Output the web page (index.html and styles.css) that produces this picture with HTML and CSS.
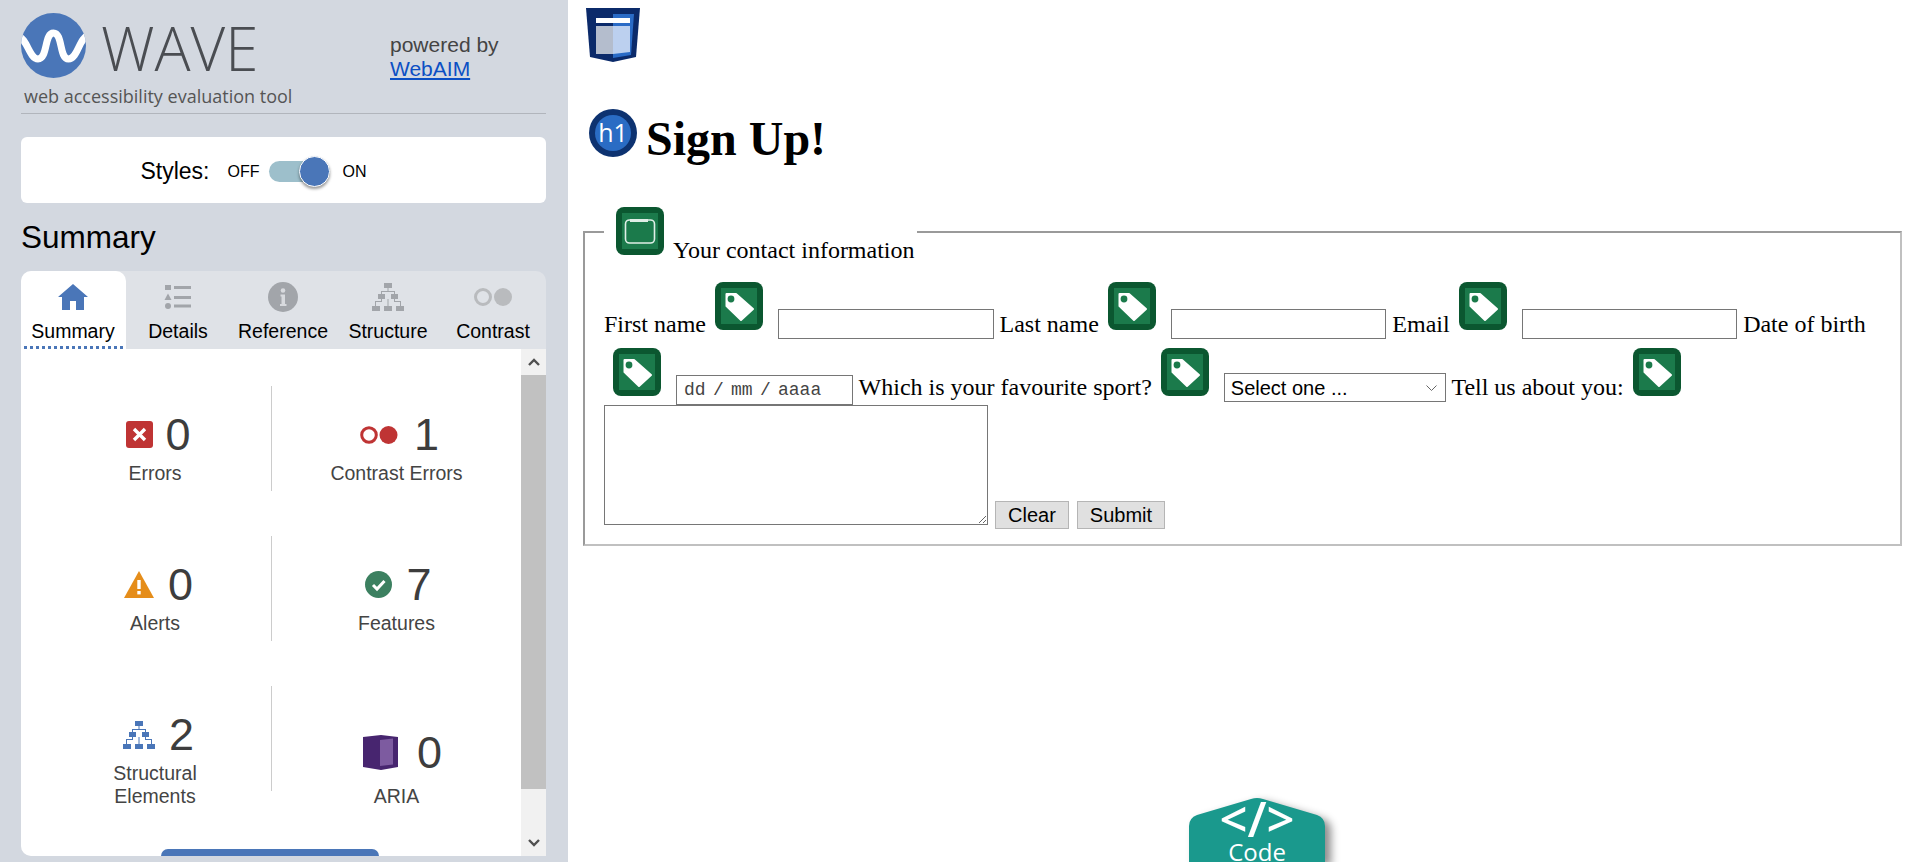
FILE: index.html
```html
<!DOCTYPE html>
<html lang="en">
<head>
    <meta charset="UTF-8">
    <meta name="viewport" content="width=device-width, initial-scale=1.0">
    <title>WAVE - Sign Up!</title>
    <link rel="stylesheet" href="styles.css">
</head>
<body>
    <svg class="defs" width="0" height="0">
        <symbol id="tag" viewBox="0 0 48 48">
            <rect width="48" height="48" rx="8" fill="#0b5730"/>
            <rect x="6" y="6" width="36" height="36" fill="#1b7a4b"/>
            <path d="M11.500 12 L21 12 L38 27 L26 38 L11.500 24 Z" fill="#fff" stroke="#fff" stroke-width="2" stroke-linejoin="round"/>
            <circle cx="16" cy="17" r="3.4" fill="#1b7a4b"/>
        </symbol>
    </svg>

    <div id="sidebar">
        <div class="brand">
            <div class="brand-main">
                <div class="brand-logo">
                    <svg class="logo-mark" width="65" height="65" viewBox="0 0 65 65">
                        <defs><clipPath id="logoClip"><circle cx="32.5" cy="32.5" r="32.5"/></clipPath></defs>
                        <circle cx="32.5" cy="32.5" r="32.5" fill="#4a76b8"/>
                        <path clip-path="url(#logoClip)" d="M-3 24 C6 24 8 46 17 46 C27 46 23 20 32.5 20 C42 20 38 46 47.5 46 C57 46 58 24 68 22" fill="none" stroke="#fff" stroke-width="7"/>
                    </svg>
                    <span class="logo-text">WAVE</span>
                </div>
                <div class="tagline">web accessibility evaluation tool</div>
            </div>
            <div class="powered">powered by<br><a href="#">WebAIM</a></div>
        </div>

        <div class="styles-card">
            <span class="styles-label">Styles:</span>
            <span class="switch-text">OFF</span>
            <span class="switch"><span class="switch-knob"></span></span>
            <span class="switch-text">ON</span>
        </div>

        <h2 class="summary-title">Summary</h2>

        <div class="panel">
            <ul class="tabs">
                <li class="tab active">
                    <svg width="30" height="26" viewBox="0 0 30 26"><path d="M15 0 L30 13 L26 13 L26 26 L18 26 L18 17 L12 17 L12 26 L4 26 L4 13 L0 13 Z" fill="#4a76b8"/></svg>
                    <span>Summary</span>
                </li>
                <li class="tab">
                    <svg width="30" height="26" viewBox="0 0 30 26" fill="#a2a5aa"><rect x="2" y="1" width="6" height="5"/><path d="M5 9.5 L8.5 16 L1.5 16 Z"/><circle cx="5" cy="22" r="3"/><rect x="11" y="2" width="17" height="3"/><rect x="11" y="12" width="17" height="3"/><rect x="11" y="20.500" width="17" height="3"/></svg>
                    <span>Details</span>
                </li>
                <li class="tab">
                    <svg width="30" height="30" viewBox="0 0 30 30"><circle cx="15" cy="15" r="15" fill="#a2a5aa"/><circle cx="15" cy="8.500" r="2.300" fill="#d8dade"/><path d="M12.500 12.500 L17 12.500 L17 22 L18.500 22 L18.500 24 L12 24 L12 22 L13.500 22 L13.500 14.500 L12.500 14.500 Z" fill="#d8dade"/></svg>
                    <span>Reference</span>
                </li>
                <li class="tab">
                    <svg width="32" height="28" viewBox="0 0 32 28" fill="#a2a5aa"><rect x="12" y="0" width="8" height="5"/><rect x="6" y="11" width="7" height="5"/><rect x="19" y="11" width="7" height="5"/><rect x="0" y="23" width="8" height="5"/><rect x="12" y="23" width="8" height="5"/><rect x="24" y="23" width="8" height="5"/><path d="M15.500 5 h1 v3 h-1z M9 8 h14 v3 h-1 v-2 h-12 v2 h-1z M9 16 h1 v3 h-6 v4 h-1 v-5 h6z M22 16 h1 v2 h6 v5 h-1 v-4 h-6z M15.500 16 h1 v7 h-1z"/></svg>
                    <span>Structure</span>
                </li>
                <li class="tab">
                    <svg class="tab-contrast" width="38" height="18" viewBox="0 0 38 18"><circle cx="9" cy="9" r="7.500" fill="none" stroke="#b9bbbe" stroke-width="3"/><circle cx="29" cy="9" r="9" fill="#b9bbbe"/></svg>
                    <span>Contrast</span>
                </li>
            </ul>
            <div class="panel-body">
                <div class="stats">
                    <div class="stat stat-left">
                        <div class="stat-row stat-row-tight">
                            <svg width="27" height="27" viewBox="0 0 27 27"><rect width="27" height="27" rx="3" fill="#bf3434"/><path d="M8 8 L19 19 M19 8 L8 19" stroke="#fff" stroke-width="3.400"/></svg>
                            <span class="stat-num">0</span>
                        </div>
                        <div class="stat-label">Errors</div>
                    </div>
                    <div class="stat stat-right">
                        <div class="stat-row stat-row-contrast">
                            <svg width="38" height="18" viewBox="0 0 38 18"><circle cx="9" cy="9" r="7.300" fill="none" stroke="#bf3434" stroke-width="3"/><circle cx="28.500" cy="9" r="9" fill="#bf3434"/></svg>
                            <span class="stat-num">1</span>
                        </div>
                        <div class="stat-label">Contrast Errors</div>
                    </div>
                    <div class="stat stat-left">
                        <div class="stat-row">
                            <svg width="30" height="27" viewBox="0 0 30 27"><path d="M15 0 L30 27 L0 27 Z" fill="#e58d1a"/><rect x="13.300" y="9" width="3.400" height="9" fill="#fff"/><rect x="13.300" y="20" width="3.400" height="3.400" fill="#fff"/></svg>
                            <span class="stat-num">0</span>
                        </div>
                        <div class="stat-label">Alerts</div>
                    </div>
                    <div class="stat stat-right">
                        <div class="stat-row">
                            <svg width="27" height="27" viewBox="0 0 27 27"><circle cx="13.500" cy="13.500" r="13.500" fill="#3c8060"/><path d="M8 14 L12 18 L19.500 10" fill="none" stroke="#fff" stroke-width="3"/></svg>
                            <span class="stat-num">7</span>
                        </div>
                        <div class="stat-label">Features</div>
                    </div>
                    <div class="stat stat-left">
                        <div class="stat-row">
                            <svg width="32" height="28" viewBox="0 0 32 28" fill="#4a76b8"><rect x="12" y="0" width="8" height="5"/><rect x="6" y="11" width="7" height="5"/><rect x="19" y="11" width="7" height="5"/><rect x="0" y="23" width="8" height="5"/><rect x="12" y="23" width="8" height="5"/><rect x="24" y="23" width="8" height="5"/><path d="M15.500 5 h1 v3 h-1z M9 8 h14 v3 h-1 v-2 h-12 v2 h-1z M9 16 h1 v3 h-6 v4 h-1 v-5 h6z M22 16 h1 v2 h6 v5 h-1 v-4 h-6z M15.500 16 h1 v7 h-1z"/></svg>
                            <span class="stat-num">2</span>
                        </div>
                        <div class="stat-label">Structural<br>Elements</div>
                    </div>
                    <div class="stat stat-right stat-low">
                        <div class="stat-row stat-row-wide">
                            <svg width="35" height="35" viewBox="0 0 35 35"><path d="M0 2 L18 0 L35 2 L35 32 L18 35 L0 32 Z" fill="#47256f"/><path d="M17 5 L30 3.500 L30 29.500 L17 31 Z" fill="#7d5ba0"/></svg>
                            <span class="stat-num">0</span>
                        </div>
                        <div class="stat-label">ARIA</div>
                    </div>
                </div>
                <div class="run-btn"></div>
                <div class="scrollbar">
                    <div class="scroll-arrow">
                        <svg width="12" height="8" viewBox="0 0 12 8"><path d="M1 7 L6 2 L11 7" fill="none" stroke="#505050" stroke-width="2.400"/></svg>
                    </div>
                    <div class="scroll-thumb"></div>
                    <div class="scroll-space"></div>
                    <div class="scroll-arrow">
                        <svg width="12" height="8" viewBox="0 0 12 8"><path d="M1 1 L6 6 L11 1" fill="none" stroke="#505050" stroke-width="2.400"/></svg>
                    </div>
                </div>
            </div>
        </div>
    </div>

    <div id="main">
        <svg class="shield" width="54" height="54" viewBox="0 0 54 54">
            <path d="M0 0 L54 0 L50 49 L27 54 L4 49 Z" fill="#0b2a6a"/>
            <path d="M27 6 L48 6 L45 47 L27 50 Z" fill="#2a6bc6"/>
            <rect x="10" y="10" width="34" height="5" fill="#fff"/>
            <rect x="10" y="18" width="17" height="28" fill="#b4bdcd"/>
            <path d="M27 18 L44 18 L44 44 L27 46 Z" fill="#bcd0ef"/>
        </svg>

        <h1 class="page-title">
            <svg class="h1-icon" width="48" height="48" viewBox="0 0 48 48">
                <circle cx="24" cy="24" r="24" fill="#0d3270"/>
                <circle cx="24" cy="24" r="18" fill="#2a6cc4"/>
                <text x="24" y="33" text-anchor="middle" class="h1-icon-text">h1</text>
            </svg><span class="title-text">Sign Up!</span>
        </h1>

        <form>
            <fieldset class="contact">
                <legend><svg class="icon" width="48" height="48" viewBox="0 0 48 48"><rect width="48" height="48" rx="8" fill="#0b5730"/><rect x="6" y="6" width="36" height="36" fill="#1b7a4b"/><rect x="9.500" y="13" width="29" height="23" rx="4" fill="none" stroke="#dfeee6" stroke-width="1.600"/><rect x="14" y="12" width="18" height="3" fill="#dfeee6"/></svg>Your contact information</legend>
                First name<svg class="icon"><use href="#tag"/></svg> <input class="text-input" type="text"> Last name<svg class="icon"><use href="#tag"/></svg> <input class="text-input" type="text"> Email<svg class="icon"><use href="#tag"/></svg> <input class="text-input" type="text"> Date of birth
                <svg class="icon icon-low"><use href="#tag"/></svg> <input class="date-input" type="text" value="dd / mm / aaaa"> Which is your favourite sport?<svg class="icon icon-low"><use href="#tag"/></svg> <select class="sport">
                    <option>Select one ...</option>
                </select> Tell us about you:<svg class="icon icon-low"><use href="#tag"/></svg><br>
                <textarea class="about"></textarea>
                <button class="btn btn-clear" type="button">Clear</button>
                <button class="btn" type="button">Submit</button>
            </fieldset>
        </form>

        <div class="code-tab">
            <svg class="code-shape" width="136" height="64" viewBox="0 0 136 64"><path d="M0 28 Q0 20 8 17 L62 1 Q68 -1 74 1 L128 17 Q136 20 136 28 L136 64 L0 64 Z" fill="#1a998d"/></svg>
            <div class="code-mark">&lt;/&gt;</div>
            <div class="code-text">Code</div>
        </div>
    </div>
</body>
</html>
```

FILE: styles.css
```css
*{
    box-sizing: border-box;
}
html,body{
    margin: 0;
    padding: 0;
    height: 100%;
    overflow: hidden;
}
body{
    display: flex;
    background: #fff;
    font-family: "Liberation Serif", serif;
}
.defs{
    position: absolute;
}
#sidebar{
    width: 568px;
    height: 862px;
    flex: none;
    padding: 0 22px 0 21px;
    background: #d3d8e0;
    font-family: "Liberation Sans", sans-serif;
}
.brand{
    display: flex;
    height: 114px;
    border-bottom: 1px solid #b1b5bc;
}
.brand-main{
    width: 369px;
}
.brand-logo{
    display: flex;
    align-items: center;
    gap: 15px;
    height: 78px;
    padding-top: 13px;
}
.logo-mark{
    flex: none;
}
.logo-text{
    margin-top: 4px;
    font-family: "Open Sans", sans-serif;
    font-weight: 300;
    font-size: 60px;
    line-height: 60px;
    color: #4a4d52;
}
.tagline{
    margin: 6px 0 0 3px;
    font-family: "Open Sans", sans-serif;
    font-size: 18px;
    line-height: 24px;
    color: #555;
}
.powered{
    padding-top: 33px;
    font-size: 21px;
    line-height: 24px;
    color: #444;
}
.powered a{
    color: #0b4fc4;
}
.styles-card{
    display: flex;
    align-items: center;
    justify-content: center;
    height: 66px;
    margin-top: 23px;
    padding: 3px 60px 0 0;
    background: #fff;
    border-radius: 6px;
}
.styles-label{
    margin-right: 18px;
    font-size: 23px;
}
.switch-text{
    font-size: 16px;
}
.switch{
    position: relative;
    width: 61px;
    height: 21px;
    margin: 0 13px 0 9px;
    background: #9dbfcb;
    border-radius: 11px;
}
.switch-knob{
    position: absolute;
    top: -5px;
    right: 0;
    width: 31px;
    height: 31px;
    background: #4a76b8;
    border: 1px solid #fff;
    border-radius: 50%;
    box-shadow: 0 2px 3px rgba(0,0,0,0.4);
}
.summary-title{
    height: 68px;
    margin: 0;
    padding-top: 12px;
    font-weight: normal;
    font-size: 31.500px;
    line-height: 44px;
}
.panel{
    width: 525px;
    background: #dfe2e7;
    border-radius: 10px 10px 0 10px;
}
.tabs{
    display: flex;
    height: 78px;
    margin: 0;
    padding: 0;
    list-style: none;
}
.tab{
    position: relative;
    display: flex;
    flex-direction: column;
    align-items: center;
    width: 105px;
    height: 78px;
    padding: 11px 1px 0 0;
    font-size: 19.500px;
    border-radius: 10px 10px 0 0;
}
.tab svg{
    height: 30px;
}
.tab span{
    margin-top: 8px;
    line-height: 22px;
}
.tab.active{
    background: #fff;
}
.tab.active::after{
    content: "";
    position: absolute;
    left: 3px;
    right: 3px;
    bottom: 0;
    border-bottom: 3px dotted #4a76b8;
}
.panel-body{
    position: relative;
    display: flex;
    height: 507px;
    background: #fff;
    border-radius: 0 0 0 10px;
    overflow: hidden;
}
.stats{
    display: grid;
    grid-template-columns: 251px 249px;
    grid-auto-rows: 105px;
    row-gap: 45px;
    width: 500px;
    padding-top: 37px;
}
.stat{
    display: flex;
    flex-direction: column;
    align-items: center;
    padding-top: 26px;
    color: #444;
}
.stat-left{
    padding-left: 18px;
    border-right: 1px solid #ccc;
}
.stat-left .stat-row{
    padding-left: 7px;
}
.stat-right .stat-row{
    margin-left: 4px;
}
.stat-low{
    padding-top: 44px;
}
.stat-low .stat-label{
    margin-top: 10px;
}
.stat-row{
    display: flex;
    align-items: center;
    gap: 14px;
    height: 45px;
}
.stat-row-tight{
    gap: 12px;
}
.stat-right .stat-row-contrast{
    gap: 16px;
    margin-left: 6px;
}
.stat-right .stat-row-wide{
    gap: 19px;
    margin-left: 12px;
}
.stat-num{
    font-size: 45px;
    line-height: 45px;
    color: #3d3d3d;
}
.stat-label{
    margin-top: 5px;
    font-size: 19.500px;
    line-height: 23px;
    text-align: center;
}
.run-btn{
    position: absolute;
    left: 140px;
    bottom: 0;
    width: 218px;
    height: 7px;
    background: #4a76b8;
    border-radius: 8px 8px 0 0;
}
.scrollbar{
    display: flex;
    flex-direction: column;
    width: 25px;
    height: 100%;
    margin-left: auto;
    background: #f1f1f1;
}
.scroll-arrow{
    display: flex;
    align-items: center;
    justify-content: center;
    height: 26px;
    flex: none;
}
.scroll-thumb{
    height: 414px;
    background: #c1c1c1;
}
.scroll-space{
    flex: 1;
}
#main{
    flex: 1;
    min-width: 0;
    padding: 8px 16px 0 15px;
}
.shield{
    display: block;
    margin-left: 3px;
}
.page-title{
    display: flex;
    align-items: center;
    height: 54px;
    margin: 44px 0 0 6px;
    font-size: 48px;
    line-height: 54px;
}
.title-text{
    margin-top: 12px;
}
.h1-icon{
    margin-right: 9px;
}
.h1-icon-text{
    font-family: "Open Sans", sans-serif;
    font-weight: normal;
    font-size: 25px;
    fill: #fff;
}
.contact{
    margin: 40px 0 0;
    padding: 18px 19px 13px;
    border: 2px solid;
    border-color: #9a9a9a #c0c0c0 #c0c0c0 #9a9a9a;
    font-size: 24px;
}
.contact legend{
    padding: 7px 2px 0 3px;
}
.icon{
    width: 48px;
    height: 48px;
    margin: 0 9px;
    vertical-align: 2px;
}
.contact legend .icon{
    vertical-align: 3px;
}
.icon-low{
    margin-top: 9px;
    vertical-align: -1px;
}
.text-input{
    width: 215.500px;
    height: 30px;
    border: 1px solid #767676;
    vertical-align: 4px;
}
.date-input{
    width: 177px;
    height: 30px;
    padding: 0 7px;
    border: 1px solid #767676;
    font-family: "Liberation Mono", monospace;
    font-size: 18px;
    word-spacing: -3.500px;
    color: #444;
}
.sport{
    width: 222px;
    height: 29px;
    padding-left: 6px;
    border: 1px solid #767676;
    background: #fff url("data:image/svg+xml,%3Csvg xmlns='http://www.w3.org/2000/svg' width='11' height='6'%3E%3Cpath d='M.5.5 5.500 5.500 10.500.5' fill='none' stroke='%23666'/%3E%3C/svg%3E") no-repeat right 8px center;
    font-family: "Liberation Sans", sans-serif;
    font-size: 20px;
    appearance: none;
}
.about{
    width: 384px;
    height: 120px;
    border: 1px solid #767676;
}
.btn{
    height: 28px;
    padding: 0 12px;
    background: #e0e0e0;
    border: 1px solid #b5b5b5;
    font-family: "Liberation Sans", sans-serif;
    font-size: 20px;
    vertical-align: 3px;
}
.btn-clear{
    margin: 0 2px 0 1px;
}
.code-tab{
    position: absolute;
    left: 1189px;
    top: 798px;
    width: 136px;
    height: 64px;
    color: #fff;
    text-align: center;
    font-family: "Open Sans", sans-serif;
}
.code-shape{
    position: absolute;
    left: 0;
    top: 0;
    filter: drop-shadow(6px 4px 4px rgba(0,0,0,0.45));
}
.code-mark{
    position: relative;
    font-size: 49px;
    font-weight: 600;
    line-height: 40px;
}
.code-text{
    position: relative;
    margin-top: 4px;
    font-size: 24px;
    line-height: 20px;
}
```
